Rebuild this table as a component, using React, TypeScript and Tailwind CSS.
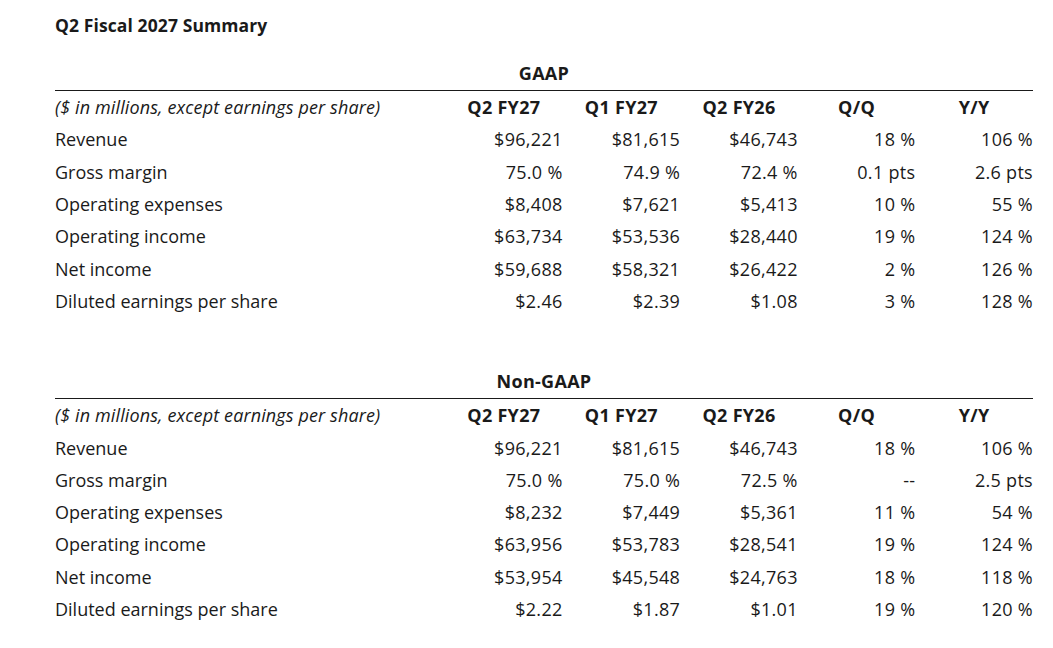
import React from "react";

type Row = { label: string; values: string[] };

const gaapRows: Row[] = [
    { label: "Revenue", values: ["$96,221", "$81,615", "$46,743", "18 %", "106 %"] },
    { label: "Gross margin", values: ["75.0 %", "74.9 %", "72.4 %", "0.1 pts", "2.6 pts"] },
    { label: "Operating expenses", values: ["$8,408", "$7,621", "$5,413", "10 %", "55 %"] },
    { label: "Operating income", values: ["$63,734", "$53,536", "$28,440", "19 %", "124 %"] },
    { label: "Net income", values: ["$59,688", "$58,321", "$26,422", "2 %", "126 %"] },
    { label: "Diluted earnings per share", values: ["$2.46", "$2.39", "$1.08", "3 %", "128 %"] },
];

const nonGaapRows: Row[] = [
    { label: "Revenue", values: ["$96,221", "$81,615", "$46,743", "18 %", "106 %"] },
    { label: "Gross margin", values: ["75.0 %", "75.0 %", "72.5 %", "--", "2.5 pts"] },
    { label: "Operating expenses", values: ["$8,232", "$7,449", "$5,361", "11 %", "54 %"] },
    { label: "Operating income", values: ["$63,956", "$53,783", "$28,541", "19 %", "124 %"] },
    { label: "Net income", values: ["$53,954", "$45,548", "$24,763", "18 %", "118 %"] },
    { label: "Diluted earnings per share", values: ["$2.22", "$1.87", "$1.01", "19 %", "120 %"] },
];

const columns = ["Q2 FY27", "Q1 FY27", "Q2 FY26", "Q/Q", "Y/Y"];

const SummaryTable: React.FC<{ title: string; rows: Row[] }> = ({ title, rows }) => {
    return (
        <div className="w-[978px]">
            <div className="text-center font-bold text-[18px] tracking-[0.3px] leading-[24px] pb-[5px] border-b border-[#1a1a1a]">{title}</div>
            <div className="grid grid-cols-[390px_repeat(5,1fr)] h-[32.3px] items-center">
                <div className="italic tracking-[0.12px]">($ in millions, except earnings per share)</div>
                {columns.map((c) => (
                    <div key={c} className="text-center font-bold tracking-[0.3px]">{c}</div>
                ))}
            </div>
            {rows.map((row) => (
                <div key={row.label} className="grid grid-cols-[390px_repeat(5,1fr)] h-[32.3px] items-center">
                    <div>{row.label}</div>
                    {row.values.map((v, i) => (
                        <div key={i} className="text-right tracking-[0.3px]">{v}</div>
                    ))}
                </div>
            ))}
        </div>
    );
};

export default function App() {
    return (
        <div className="min-h-screen bg-white text-[#1a1a1a] text-[18px] leading-[24px] pl-[55px] pt-[13px] font-['Open_Sans',sans-serif]">
            <h1 className="font-bold text-[17.5px] tracking-[0.1px]">Q2 Fiscal 2027 Summary</h1>
            <div className="mt-[24px]">
                <SummaryTable title="GAAP" rows={gaapRows} />
            </div>
            <div className="mt-[52px]">
                <SummaryTable title="Non-GAAP" rows={nonGaapRows} />
            </div>
        </div>
    );
}
